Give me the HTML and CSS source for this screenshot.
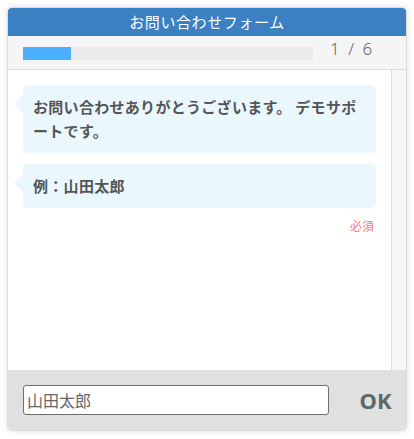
FILE: index.html
```html
<!DOCTYPE html>
<html lang="ja">
<head>
    <meta charset="UTF-8">
    <title>お問い合わせフォーム</title>
    <link rel="stylesheet" href="styles.css">
</head>
<body>
    <div class="widget">
        <div class="widget-head">お問い合わせフォーム</div>
        <div class="progress">
            <div class="progress-track"><div class="progress-fill" style="width: 16.5%"></div></div>
            <div class="progress-count">1 / 6</div>
        </div>
        <div class="chat">
            <div class="messages">
                <div class="bubble">お問い合わせありがとうございます。 デモサポートです。</div>
                <div class="bubble">例：山田太郎</div>
                <div class="required">必須</div>
            </div>
            <div class="scroll-col"></div>
        </div>
        <div class="widget-foot">
            <input type="text" class="answer" value="山田太郎">
            <button type="button" class="ok-btn">OK</button>
        </div>
    </div>
</body>
</html>
```

FILE: styles.css
```css
* {
    box-sizing: border-box;
}
body {
    margin: 0;
    padding: 7px;
    background: #fff;
    font-family: "Noto Sans CJK JP", "Noto Sans", sans-serif;
}
.widget {
    width: 400px;
    border: 1px solid #dcdcdc;
    border-radius: 5px;
    overflow: hidden;
    box-shadow: 0 0 6px rgba(0, 0, 0, 0.12);
}
.widget-head {
    height: 29px;
    margin: -1px -1px 0 -1px;
    background: #3a80c2;
    color: #fff;
    font-size: 15px;
    line-height: 29px;
    text-align: center;
    letter-spacing: 0.6px;
}
.progress {
    display: flex;
    height: 34px;
    background: #f5f5f5;
    border-bottom: 1px solid #dcdcdc;
    padding: 0 0 0 15px;
}
.progress-track {
    width: 290px;
    height: 13px;
    margin-top: 11px;
    background: #ebebeb;
}
.progress-fill {
    height: 100%;
    background: #4bb1ff;
}
.progress-count {
    flex: 1;
    padding-left: 17px;
    font-family: "Noto Sans", sans-serif;
    font-size: 17px;
    font-weight: 300;
    line-height: 26px;
    letter-spacing: 2px;
    color: #666;
}
.chat {
    display: flex;
    height: 300px;
    background: #fff;
}
.messages {
    flex: 1;
    padding: 15px 15px 0 15px;
}
.scroll-col {
    width: 15px;
    background: #f7f7f7;
    border-left: 1px solid #dedede;
}
.bubble {
    position: relative;
    background: #eaf8fe;
    border-radius: 5px;
    padding: 10px 10px;
    margin-bottom: 11px;
    color: #555;
    font-size: 15px;
    font-weight: bold;
    line-height: 24px;
    letter-spacing: 0.3px;
}
.bubble::before {
    content: "";
    position: absolute;
    left: -9px;
    top: 10px;
    border-top: 9px solid transparent;
    border-bottom: 9px solid transparent;
    border-right: 9px solid #eaf8fe;
}
.required {
    text-align: right;
    padding-right: 2px;
    margin-top: -1px;
    color: #f77;
    font-size: 12px;
    line-height: 16px;
}
.widget-foot {
    display: flex;
    align-items: center;
    height: 60px;
    background: #e0e0e0;
    padding: 0 0 0 15px;
}
.answer {
    width: 306px;
    height: 30px;
    border: 1px solid #6e6e6e;
    border-radius: 3px;
    padding: 0 3px;
    font-family: "Noto Sans CJK JP", sans-serif;
    font-size: 16px;
    color: #666;
    background: #fff;
}
.ok-btn {
    flex: 1;
    border: none;
    background: none;
    padding: 0 0 0 16px;
    font-family: "Noto Sans", sans-serif;
    font-size: 22px;
    font-weight: bold;
    color: #5a6a6a;
}
```
